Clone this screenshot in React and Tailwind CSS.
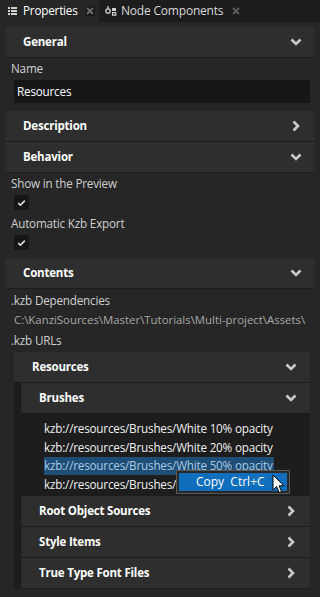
import React from "react";

function ChevronDown() {
  return (
    <svg width="12" height="8" viewBox="0 0 12 8" className="block">
      <polyline points="1.5,1.5 6,6 10.5,1.5" fill="none" stroke="#c9c9c9" strokeWidth="2.6" strokeLinejoin="miter" />
    </svg>
  );
}

function ChevronRight() {
  return (
    <svg width="8" height="12" viewBox="0 0 8 12" className="block">
      <polyline points="1.5,1.5 6,6 1.5,10.5" fill="none" stroke="#c9c9c9" strokeWidth="2.6" strokeLinejoin="miter" />
    </svg>
  );
}

function SectionHeader({ title, open = true, className = "" }) {
  return (
    <div className={`flex h-[31px] items-center justify-between border-b border-[#1c1c1c] bg-[#2e2e2e] ${className}`}>
      <span className="text-[11.5px] font-bold tracking-[-0.2px] text-white">{title}</span>
      {open ? <ChevronDown /> : <ChevronRight />}
    </div>
  );
}

function Checkbox() {
  return (
    <div className="flex h-[15px] w-[15px] items-center justify-center bg-[#161616]">
      <svg width="9" height="8" viewBox="0 0 9 8">
        <polyline points="1.2,4.2 3.4,6.2 7.8,1.6" fill="none" stroke="#e0e0e0" strokeWidth="1.6" />
      </svg>
    </div>
  );
}

function Cursor() {
  return (
    <svg width="15" height="20" viewBox="0 0 15 20" className="absolute left-[272px] top-[474px]">
      <path d="M1 1 L1 16 L4.6 12.6 L7.2 18.6 L9.6 17.6 L7.1 11.8 L12 11.8 Z" fill="#ffffff" stroke="#000000" strokeWidth="1" strokeLinejoin="round" />
    </svg>
  );
}

const brushes = [
  "kzb://resources/Brushes/White 10% opacity",
  "kzb://resources/Brushes/White 20% opacity",
  "kzb://resources/Brushes/White 50% opacity",
  "kzb://resources/Brushes/White 60% opacity",
];

export default function App() {
  return (
    <div
      className="relative h-[597px] w-[320px] overflow-hidden bg-[#262626] text-[11.7px] tracking-[-0.2px] text-[#d6d6d6]"
      style={{ fontFamily: '"Open Sans", "Noto Sans", sans-serif' }}
    >
      {/* tab strip */}
      <div className="flex h-[22px] bg-[#1c1c1c]">
        <div className="flex w-[99px] items-center bg-[#262626] pl-[8px]">
          <svg width="9" height="8" viewBox="0 0 9 8" className="mr-[6px]">
            <rect x="0" y="0" width="2" height="2" fill="#d0d0d0" />
            <rect x="3" y="0" width="6" height="2" fill="#d0d0d0" />
            <rect x="0" y="3" width="2" height="2" fill="#d0d0d0" />
            <rect x="3" y="3" width="6" height="2" fill="#d0d0d0" />
            <rect x="0" y="6" width="2" height="2" fill="#d0d0d0" />
            <rect x="3" y="6" width="6" height="2" fill="#d0d0d0" />
          </svg>
          <span className="text-[11.7px] text-white">Properties</span>
          <span className="ml-[7px] flex h-[10px] w-[10px] items-center justify-center bg-[#1a1a1a]">
            <svg width="8" height="8" viewBox="0 0 8 8">
              <path d="M1 1 L7 7 M7 1 L1 7" stroke="#6c6c6c" strokeWidth="1.8" />
            </svg>
          </span>
        </div>
        <div className="flex items-center pl-[6px]">
          <svg width="13" height="11" viewBox="0 0 13 11" className="mr-[3px]">
            <circle cx="3" cy="5" r="2.2" fill="none" stroke="#d0d0d0" strokeWidth="1.3" />
            <path d="M3 0 L3 2.8" stroke="#d0d0d0" strokeWidth="1.3" />
            <rect x="7" y="2" width="4" height="3" fill="#d0d0d0" />
            <rect x="7.6" y="6.6" width="3.2" height="2.6" fill="none" stroke="#d0d0d0" strokeWidth="1.2" />
          </svg>
          <span className="text-[12px] text-[#d8d8d8]">Node Components</span>
          <svg width="8" height="8" viewBox="0 0 8 8" className="ml-[9px]">
            <path d="M1 1 L7 7 M7 1 L1 7" stroke="#5e5e5e" strokeWidth="1.8" />
          </svg>
        </div>
      </div>

      <div className="px-[5px] pt-[5px]">
        <SectionHeader title="General" className="pl-[18px] pr-[13px]" />
        <div className="pl-[6px] pt-[2px] leading-[16px] text-[#cfcfcf]">Name</div>
        <div className="ml-[9px] mr-[5px] mt-[4px] flex h-[23px] items-center bg-[#161616] pl-[3px] text-white">
          Resources
        </div>
        <SectionHeader title="Description" open={false} className="mt-[8px] pl-[18px] pr-[15px]" />
        <SectionHeader title="Behavior" className="pl-[18px] pr-[13px]" />
        <div className="pl-[6px] pt-[2px] leading-[16px] text-[#cfcfcf]">Show in the Preview</div>
        <div className="ml-[9px] mt-[4px]">
          <Checkbox />
        </div>
        <div className="pl-[6px] pt-[5px] leading-[16px] text-[#cfcfcf]">Automatic Kzb Export</div>
        <div className="ml-[9px] mt-[4px]">
          <Checkbox />
        </div>
        <SectionHeader title="Contents" className="mt-[8px] pl-[18px] pr-[13px]" />
        <div className="pl-[6px] pt-[1px] leading-[20px] text-[#cfcfcf]">.kzb Dependencies</div>
        <div className="whitespace-nowrap pl-[9px] text-[11.4px] leading-[20px] tracking-normal text-[#a8a8a8]">
          C:\KanziSources\Master\Tutorials\Multi-project\Assets\
        </div>
        <div className="pl-[6px] leading-[20px] text-[#cfcfcf]">.kzb URLs</div>

        <div className="ml-[9px] mr-[5px] mt-[2px] bg-[#1d1d1d]">
          <SectionHeader title="Resources" className="pl-[18px] pr-[13px]" />
          <div className="pl-[7px]">
            <SectionHeader title="Brushes" className="pl-[18px] pr-[13px]" />
            <div className="pb-[2px] pl-[23px] pt-[6px]">
              {brushes.map((b, i) =>
                i === 2 ? (
                  <div key={b} className="flex h-[18.5px] items-center">
                    <span className="whitespace-nowrap bg-[#1e4d75] pr-[1px] text-[#a9cbe6]">{b}</span>
                  </div>
                ) : (
                  <div key={b} className="flex h-[18.5px] items-center whitespace-nowrap text-[#f0f0f0]">
                    {b}
                  </div>
                )
              )}
            </div>
            <SectionHeader title="Root Object Sources" open={false} className="pl-[18px] pr-[15px]" />
            <SectionHeader title="Style Items" open={false} className="pl-[18px] pr-[15px]" />
            <SectionHeader title="True Type Font Files" open={false} className="pl-[18px] pr-[15px]" />
          </div>
        </div>
      </div>

      {/* context menu */}
      <div className="absolute left-[176px] top-[470px] flex h-[24px] w-[114px] items-center border border-[#5a5a5a] bg-[#2a2a2a] p-[2px]">
        <div className="flex h-full w-full items-center whitespace-nowrap bg-[#0f6fbd] pl-[17px] text-[12px] tracking-normal text-white">
          Copy&nbsp;&nbsp;Ctrl+C
        </div>
      </div>
      <Cursor />
    </div>
  );
}
